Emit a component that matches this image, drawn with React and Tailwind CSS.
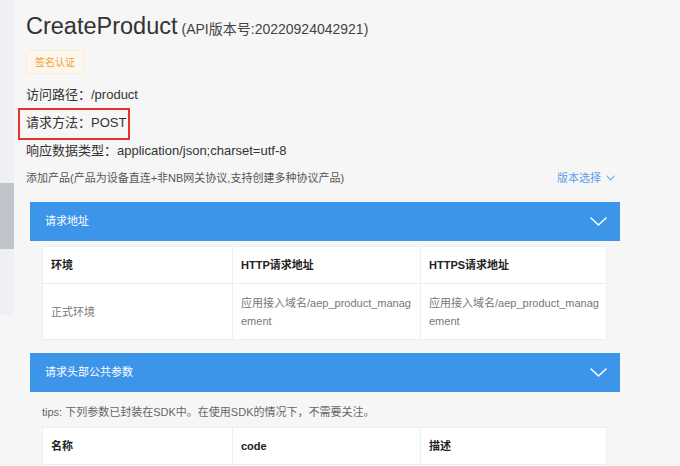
import React from 'react';

const font = { fontFamily: '"Liberation Sans", "Noto Sans CJK SC", sans-serif' };

const Chevron = ({ className = '', w = 17, h = 9, sw = 1.6 }) => (
    <svg width={w} height={h} viewBox={`0 0 ${w} ${h}`} className={className} fill="none">
        <polyline points={`1,1 ${w / 2},${h - 1} ${w - 1},1`} stroke="currentColor" strokeWidth={sw} strokeLinecap="round" strokeLinejoin="round" />
    </svg>
);

const SectionBar = ({ title }) => (
    <div className="h-[39px] bg-[#3d95ea] flex items-center justify-between pl-[15px] pr-[13px] text-white text-[11px]">
        <span>{title}</span>
        <Chevron className="text-white" />
    </div>
);

const Table = ({ head, rows }) => (
    <div className="w-[565px] bg-white border border-[#ebeef5]">
        <div className="grid grid-cols-[189px_188px_188px] h-[37px] border-b border-[#ebeef5]">
            {head.map((h, i) => (
                <div key={i} className={`flex items-center px-[8px] text-[11px] font-bold text-[#222] ${i > 0 ? 'border-l border-[#ebeef5]' : ''}`}>
                    {h}
                </div>
            ))}
        </div>
        {rows.map((row, ri) => (
            <div key={ri} className="grid grid-cols-[189px_188px_188px] min-h-[55px]">
                {row.map((c, i) => (
                    <div key={i} className={`flex items-center px-[8px] py-[9px] text-[11px] leading-[18px] text-[#777] break-all ${i > 0 ? 'border-l border-[#ebeef5]' : ''}`}>
                        {c}
                    </div>
                ))}
            </div>
        ))}
    </div>
);

export default function App() {
    return (
        <div className="w-[680px] h-[466px] overflow-hidden bg-[#f6f6f6] flex" style={font}>
            {/* side strip */}
            <div className="w-[14px] h-[315px] shrink-0 bg-[#eef0f3]">
                <div className="mt-[183px] h-[66px] bg-[#c0c4cb]"></div>
            </div>

            <div className="pl-[12px] pt-[8px] w-[606px] shrink-0">
                <div className="pt-[2px] leading-[32px] text-[#333] whitespace-nowrap">
                    <span className="text-[23.5px]">CreateProduct</span>
                    <span className="text-[14px] ml-[4px] text-[#444]">(API版本号:20220924042921)</span>
                </div>

                <div className="mt-[5px] inline-flex items-center h-[24px] px-[8px] text-[10px] text-[#f1a23a] bg-[#fdf6ec] border border-[#faecd8] rounded-[3px]">
                    签名认证
                </div>

                <div className="mt-[7px] text-[13px] text-[#333]">
                    <div className="leading-[28px]">访问路径：/product</div>
                    <div className="leading-[28px] relative">
                        请求方法：POST
                        <span className="absolute -left-[8px] -top-[1px] w-[112px] h-[32px] border-2 border-[#e5322d]"></span>
                    </div>
                    <div className="leading-[28px]">响应数据类型：application/json;charset=utf-8</div>
                </div>

                <div className="mt-[3px] flex items-center justify-between leading-[20px] text-[11px] pr-[5px]">
                    <span className="text-[#555]">添加产品(产品为设备直连+非NB网关协议,支持创建多种协议产品)</span>
                    <span className="flex items-center gap-[5px] text-[#5ca2ea]">
                        版本选择
                        <Chevron w={9} h={6} sw={1.1} className="text-[#5ca2ea]" />
                    </span>
                </div>

                <div className="mt-[14px] ml-[4px] w-[590px]">
                    <SectionBar title="请求地址" />
                    <div className="px-[12px] pt-[5px]">
                        <Table
                            head={['环境', 'HTTP请求地址', 'HTTPS请求地址']}
                            rows={[['正式环境', '应用接入域名/aep_product_management', '应用接入域名/aep_product_management']]}
                        />
                    </div>
                </div>

                <div className="mt-[13px] ml-[4px] w-[590px]">
                    <SectionBar title="请求头部公共参数" />
                    <div className="px-[12px]">
                        <div className="mt-[10px] leading-[20px] text-[11px] text-[#666]">
                            tips: 下列参数已封装在SDK中。在使用SDK的情况下，不需要关注。
                        </div>
                        <div className="mt-[5px]">
                            <Table head={['名称', 'code', '描述']} rows={[['', '', '']]} />
                        </div>
                    </div>
                </div>
            </div>
        </div>
    );
}
